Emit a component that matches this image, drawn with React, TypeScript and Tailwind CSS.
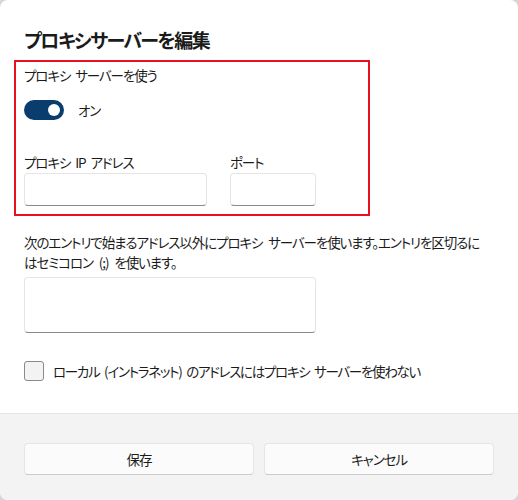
export default function App() {
  return (
    <div
      className="h-[500px] w-[518px] bg-[#d6d6d6] [font-feature-settings:'palt']"
      style={{ fontFamily: '"Noto Sans CJK JP", "Noto Sans", sans-serif' }}
    >
      <div className="flex h-full flex-col overflow-hidden rounded-[8px] bg-white text-[13.5px] leading-5 tracking-[-1.1px] text-[#1b1b1b] [word-spacing:3px]">
        <div className="flex-1 px-6">
          <h1 className="pt-[26px] text-[19px] font-semibold leading-7 tracking-[-1.5px]">プロキシサーバーを編集</h1>

          <div className="-mx-[10px] mt-[6px] w-[356px] border-2 border-[#e81123] px-[8px] pb-[8px] pt-[3px]">
            <p>プロキシ サーバーを使う</p>
            <div className="mt-[15px] flex h-5 items-center gap-[14px]">
              <div className="flex h-5 w-10 items-center justify-end rounded-full bg-[#0b3c6e] pr-[4px]">
                <div className="h-3 w-3 rounded-full bg-white" />
              </div>
              <span>オン</span>
            </div>

            <div className="mt-[32px] flex gap-[23px]">
              <div>
                <p>プロキシ IP アドレス</p>
                <div className="mt-[1px] h-[33px] w-[183px] rounded-[4px] border border-[#e5e5e5] border-b-[#8a8a8a] bg-white" />
              </div>
              <div>
                <p>ポート</p>
                <div className="mt-[1px] h-[33px] w-[86px] rounded-[4px] border border-[#e5e5e5] border-b-[#8a8a8a] bg-white" />
              </div>
            </div>
          </div>

          <p className="mt-[16px] max-w-[465px] [word-spacing:4px]">
            次のエントリで始まるアドレス以外にプロキシ サーバーを使います。エントリを区切るにはセミコロン (;) を使います。
          </p>
          <div className="mt-[5px] h-[56px] w-[292px] rounded-[4px] border border-[#e5e5e5] border-b-[#8a8a8a] bg-white" />

          <label className="mt-[28px] flex items-center gap-[9px]">
            <span className="h-5 w-5 rounded-[3px] border border-[#8a8a8a] bg-[#f3f3f3]" />
            <span className="tracking-[-1.3px]">ローカル (イントラネット) のアドレスにはプロキシ サーバーを使わない</span>
          </label>
        </div>

        <div className="grid h-[87px] grid-cols-2 gap-[10px] border-t border-[#e5e5e5] bg-[#f3f3f3] px-6 pt-[29px]">
          <button className="h-[32px] rounded-[4px] border border-[#e5e5e5] border-b-[#cccccc] bg-[#fbfbfb]">保存</button>
          <button className="h-[32px] rounded-[4px] border border-[#e5e5e5] border-b-[#cccccc] bg-[#fbfbfb]">キャンセル</button>
        </div>
      </div>
    </div>
  );
}
